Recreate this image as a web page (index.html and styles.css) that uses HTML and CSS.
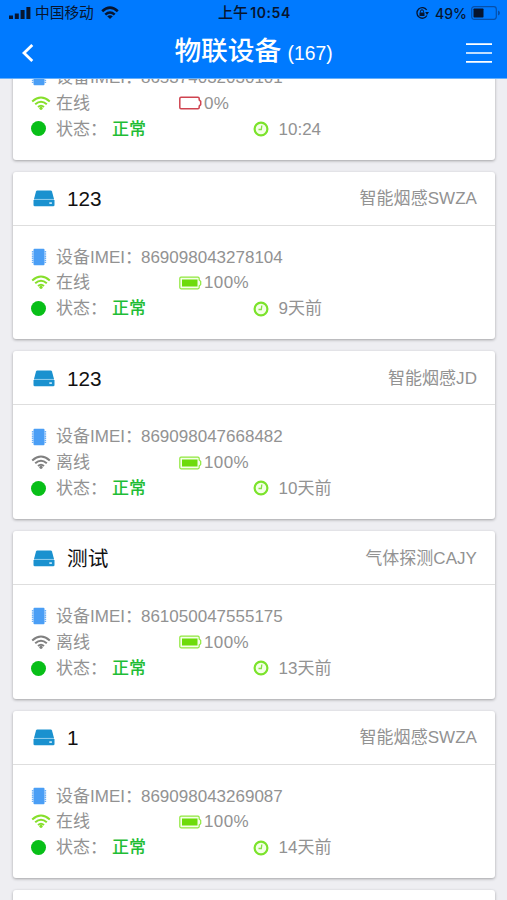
FILE: index.html
```html
<!DOCTYPE html>
<html lang="zh-CN">
<head>
<meta charset="utf-8">
<title>物联设备</title>
<link rel="stylesheet" href="styles.css">
</head>
<body>
<svg class="defs" aria-hidden="true">
  <symbol id="drive" viewBox="0 0 22 17"><path fill="#1a91cf" d="M4.300.5h13.400q1 0 1.300 1L21 8.900H1L3 1.500q.3-1 1.300-1z"/><path fill="#7cc3e8" d="M1 8.900h20v1H1z"/><path fill="#1a91cf" d="M.5 9.900h21v5.100q0 1.300-1.300 1.300H1.800Q.5 16.300.5 15z"/><path fill="#d8effa" d="M16.300 12.300h2.600v1.600h-2.600z"/></symbol>
  <symbol id="chip" viewBox="0 0 16 18"><rect x="2.500" y=".8" width="11" height="16.400" rx="1" fill="#4a9ef5"/><path d="M1.700 3v12M14.300 3v12" stroke="#6cb0f7" stroke-width="1.700" stroke-dasharray="1.500 .7"/></symbol>
  <symbol id="wifi" viewBox="0 0 20 15"><g fill="none" stroke="currentColor" stroke-width="2"><path d="M1.200 5.400Q10-2.400 18.800 5.400"/><path d="M4.200 8.300Q10 3.200 15.800 8.300"/><path d="M7 11Q10 8.500 13 11"/></g><circle cx="10" cy="12.300" r="1.600" fill="currentColor"/></symbol>
  <symbol id="battery-full" viewBox="0 0 23 14"><path d="M2 1.200h17q1.200 0 1.200 1.200v1.500l1.500 1.500v3.200l-1.500 1.500v1.500q0 1.200-1.200 1.200H2Q.8 12.800.8 11.600V2.400Q.8 1.200 2 1.200z" fill="#f5ffe9" stroke="#8fe83d" stroke-width="1.200"/><rect x="3" y="3.500" width="15.500" height="7" fill="#6ddb0b"/></symbol>
  <symbol id="battery-empty" viewBox="0 0 23 14"><path d="M2 1.200h17q1.200 0 1.200 1.200v1.500l1.500 1.500v3.200l-1.500 1.500v1.500q0 1.200-1.200 1.200H2Q.8 12.800.8 11.600V2.400Q.8 1.200 2 1.200z" fill="#fff" stroke="#cf4450" stroke-width="1.500"/></symbol>
  <symbol id="clock" viewBox="0 0 16 16"><circle cx="8" cy="8" r="6.400" fill="#f4ffe8" stroke="#7be32b" stroke-width="2.200"/><path d="M8.800 4.500L8.300 8.500H5.500" fill="none" stroke="#88df45" stroke-width="1.300"/></symbol>
</svg>
<header class="top">
  <div class="status">
    <div class="status-left">
      <svg class="signal" viewBox="0 0 22 14"><path d="M0 9.500h4V13H0zM5.800 7.500h4V13h-4zM11.600 4h4v9h-4zM17.400 1h4v12h-4z"/></svg>
      <span class="carrier">中国移动</span>
      <svg class="status-wifi" viewBox="0 0 18 14"><path fill="none" stroke="currentColor" stroke-width="2.600" d="M1.200 5.200Q9-2 16.800 5.200M4.300 8.600Q9 4.400 13.700 8.600"/><path d="M6.200 10.300Q9 8.200 11.800 10.300L9 13z"/></svg>
    </div>
    <div class="status-time">上午<b>10:54</b></div>
    <div class="status-right">
      <svg class="lock" viewBox="0 0 14 14"><path fill="none" stroke="currentColor" stroke-width="1.300" d="M11.700 4A5.300 5.300 0 1 0 11.900 9.500"/><path d="M10.200 6h3.800L12 9z"/><path d="M4.500 6.500h5V10h-5z"/><path fill="none" stroke="currentColor" stroke-width="1" d="M5.500 6.500V5.300a1.500 1.500 0 0 1 3 0v1.200"/></svg>
      <span class="percent">49%</span>
      <svg class="phone-battery" viewBox="0 0 29 14"><rect x=".7" y=".7" width="24.600" height="12.600" rx="2.500" fill="none" stroke="#064fa9" stroke-width="1.200"/><rect x="2.500" y="2.500" width="10" height="9" rx=".7"/><path fill="#064fa9" d="M27 4.500q2 .7 2 2.500t-2 2.500z"/></svg>
    </div>
  </div>
  <div class="nav">
    <svg class="back" viewBox="0 0 12 18"><path d="M10.300 1L2 9l8.300 8" fill="none" stroke="currentColor" stroke-width="2.800"/></svg>
    <h1>物联设备 <small>(167)</small></h1>
    <svg class="menu" viewBox="0 0 26 20"><path d="M0 1.200h26M0 10h26M0 18.800h26" stroke="currentColor" stroke-width="1.700"/></svg>
  </div>
</header>
<main class="list" id="list"></main>
<script src="devices.js"></script>
</body>
</html>
```
FILE: styles.css
```css
* { box-sizing: border-box; }
html, body { height: 100%; }
body {
  margin: 0;
  display: flex;
  flex-direction: column;
  overflow: hidden;
  background: #eeeef2;
  color: #929292;
  font: 17px/26px "Liberation Sans", "Noto Sans CJK SC", sans-serif;
}
svg { display: block; flex: none; }
.defs { position: absolute; width: 0; height: 0; }
.top {
  flex: none;
  height: 79px;
  background: #007aff;
  border-bottom: 1px solid #67b0fa;
  z-index: 1;
}
.status {
  height: 26px;
  padding: 0 7px 0 9px;
  display: grid;
  grid-template-columns: 1fr auto 1fr;
  align-items: center;
  color: #07152f;
  fill: currentColor;
  font-size: 14.700px;
}
.status-left, .status-right { display: flex; align-items: center; }
.status-right { justify-content: flex-end; }
.signal { width: 22px; height: 14px; }
.carrier { margin-left: 4px; }
.status-wifi { width: 18px; height: 14px; margin-left: 7px; }
.status-time { white-space: nowrap; font-size: 15px; font-weight: 500; }
.status-time b { margin-left: 2px; font-family: Inter, sans-serif; font-size: 14px; font-weight: 600; letter-spacing: .6px; }
.lock { width: 14px; height: 14px; }
.percent { margin: 0 4px 0 6px; font: 500 14px Inter, sans-serif; }
.phone-battery { width: 29px; height: 14px; }
.nav {
  height: 51px;
  padding: 0 15px 0 22px;
  display: grid;
  grid-template-columns: 1fr auto 1fr;
  align-items: center;
  color: #fff;
}
.back { width: 12px; height: 18px; }
.menu { width: 26px; height: 20px; justify-self: end; }
h1 { margin: 0 7px 0 0; font-size: 26.700px; font-weight: 500; line-height: 50px; white-space: nowrap; }
h1 small { font-size: 19.300px; font-weight: 400; margin-left: -1px; }
.list {
  flex: 1;
  min-height: 0;
  overflow: hidden;
  padding: 0 12px 0 13px;
}
.card {
  height: 167.700px;
  margin-bottom: 12px;
  background: #fff;
  border-radius: 3px;
  box-shadow: 0 1px 3px rgba(0, 0, 0, .32);
}
.card:first-child { margin-top: -87px; }
.card-head {
  height: 54px;
  padding: 2px 18px 0 20px;
  display: flex;
  align-items: center;
  border-bottom: 1px solid #dedede;
}
.drive { width: 22px; height: 17px; margin-top: -1px; }
.name { margin-left: 12px; font-size: 20.700px; color: #111; }
.model { margin-left: auto; letter-spacing: .05px; }
.card-body { padding: 19px 18px 0; }
.row { height: 25.800px; display: flex; align-items: center; white-space: nowrap; }
.row svg, .dot { margin-top: -1px; }
.lead { width: 25px; display: flex; }
.chip { width: 16px; height: 18px; }
.wifi { width: 20px; height: 15px; }
.online { color: #86df2b; }
.offline { color: #808080; }
.dot { width: 15px; height: 15px; border-radius: 50%; background: #08bf18; }
.imei i { margin-left: -1px; font-style: normal; }
.link { width: 123px; }
.battery { width: 23px; height: 14px; margin-right: 2px; }
.power { letter-spacing: .4px; }
.state { width: 197px; }
.state b { margin-left: 5px; font-weight: 500; color: #1fbd35; }
.clock { width: 16px; height: 16px; margin-right: 9.500px; }
```
FILE: devices.js
```js
const devices = [
  { name: '', model: '', imei: '865374032030101', online: true, power: 0, time: '10:24' },
  { name: '123', model: '智能烟感SWZA', imei: '869098043278104', online: true, power: 100, time: '9天前' },
  { name: '123', model: '智能烟感JD', imei: '869098047668482', online: false, power: 100, time: '10天前' },
  { name: '测试', model: '气体探测CAJY', imei: '861050047555175', online: false, power: 100, time: '13天前' },
  { name: '1', model: '智能烟感SWZA', imei: '869098043269087', online: true, power: 100, time: '14天前' }
];

const icon = (id, cls) => `<svg class="${cls}"><use href="#${id}"/></svg>`;

const card = d => `
  <section class="card">
    <div class="card-head">${icon('drive', 'drive')}<span class="name">${d.name}</span><span class="model">${d.model}</span></div>
    <div class="card-body">
      <div class="row"><span class="lead">${icon('chip', 'chip')}</span><span class="imei">设备IMEI：<i>${d.imei}</i></span></div>
      <div class="row"><span class="lead ${d.online ? 'online' : 'offline'}">${icon('wifi', 'wifi')}</span><span class="link">${d.online ? '在线' : '离线'}</span>${icon(d.power ? 'battery-full' : 'battery-empty', 'battery')}<span class="power">${d.power}%</span></div>
      <div class="row"><span class="lead"><i class="dot"></i></span><span class="state">状态：<b>正常</b></span>${icon('clock', 'clock')}<span>${d.time}</span></div>
    </div>
  </section>`;

document.getElementById('list').innerHTML = devices.map(card).join('') + '<section class="card"></section>';
```
